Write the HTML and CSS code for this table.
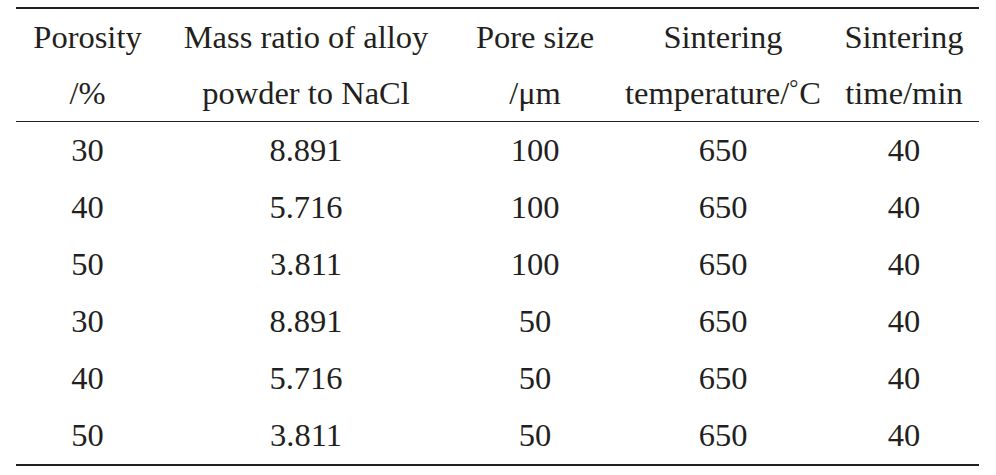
FILE: index.html
```html
<!DOCTYPE html>
<html>
<head>
<meta charset="utf-8">
<link rel="stylesheet" href="styles.css">
</head>
<body>
<table class="data">
  <colgroup>
    <col class="c1"><col class="c2"><col class="c3"><col class="c4"><col class="c5">
  </colgroup>
  <thead>
    <tr>
      <th>Porosity<br>/%</th>
      <th>Mass ratio of alloy<br>powder to NaCl</th>
      <th>Pore size<br>/μm</th>
      <th>Sintering<br>temperature/<span class="deg">°</span>C</th>
      <th>Sintering<br>time/min</th>
    </tr>
  </thead>
  <tbody>
    <tr><td>30</td><td>8.891</td><td>100</td><td>650</td><td>40</td></tr>
    <tr><td>40</td><td>5.716</td><td>100</td><td>650</td><td>40</td></tr>
    <tr><td>50</td><td>3.811</td><td>100</td><td>650</td><td>40</td></tr>
    <tr><td>30</td><td>8.891</td><td>50</td><td>650</td><td>40</td></tr>
    <tr><td>40</td><td>5.716</td><td>50</td><td>650</td><td>40</td></tr>
    <tr><td>50</td><td>3.811</td><td>50</td><td>650</td><td>40</td></tr>
  </tbody>
</table>
</body>
</html>
```
FILE: styles.css
```css
html, body {
  margin: 0;
  padding: 0;
  background: #ffffff;
}
body {
  padding: 7px 0 0 16px;
  color: #231f20;
  font-family: "Liberation Serif", "Times New Roman", serif;
}
.data {
  border-collapse: collapse;
  table-layout: fixed;
  width: 963px;
  border-top: 2px solid #231f20;
  border-bottom: 2px solid #231f20;
  font-family: "Liberation Serif", "Times New Roman", serif;
  font-size: 32.5px;
}
.c1 { width: 143px; }
.c2 { width: 294px; }
.c3 { width: 164px; }
.c4 { width: 212px; }
.c5 { width: 150px; }
.data th, .data td {
  padding: 0;
  text-align: center;
  font-weight: normal;
  white-space: nowrap;
}
.data th {
  line-height: 56px;
  border-bottom: 1px solid #231f20;
}
.data td {
  line-height: 57px;
}
.deg {
  font-size: 0.7em;
  vertical-align: 0.35em;
  line-height: 0;
  margin-right: 1px;
}
```
